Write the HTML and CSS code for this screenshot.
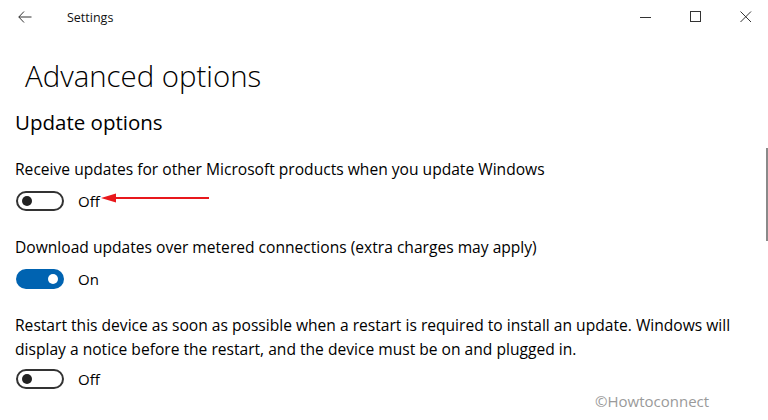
FILE: index.html
```html
<!DOCTYPE html>
<html>
<head>
<meta charset="utf-8">
<link rel="stylesheet" href="styles.css">
</head>
<body>
<div class="window">
  <div class="titlebar">
    <div class="back">
      <svg width="14" height="12" viewBox="0 0 14 12"><path d="M6 0.5 L0.8 6 L6 11.5 M0.8 6 H13.5" fill="none" stroke="#333" stroke-width="1"/></svg>
    </div>
    <div class="title">Settings</div>
    <div class="controls">
      <div class="ctl"><svg width="12" height="12" viewBox="0 0 12 12"><path d="M0 6.5 H11" stroke="#333" stroke-width="1"/></svg></div>
      <div class="ctl"><svg width="12" height="12" viewBox="0 0 12 12"><rect x="0.5" y="0.5" width="10" height="10" fill="none" stroke="#333" stroke-width="1"/></svg></div>
      <div class="ctl"><svg width="12" height="12" viewBox="0 0 12 12"><path d="M0.5 0.5 L11 11 M11 0.5 L0.5 11" stroke="#333" stroke-width="1"/></svg></div>
    </div>
  </div>
  <div class="content">
    <h1 class="page-title">Advanced options</h1>
    <h2 class="section-title">Update options</h2>

    <div class="setting first">
      <div class="label">Receive updates for other Microsoft products when you update Windows</div>
      <div class="toggle-row">
        <span class="toggle off"><span class="knob"></span></span>
        <span class="state">Off</span>
        <svg class="annot" width="112" height="12" viewBox="0 0 112 12"><path d="M12 6 H108" stroke="#e8181c" stroke-width="2"/><path d="M0 6 L15 1.5 L15 10.5 Z" fill="#e8181c"/></svg>
      </div>
    </div>

    <div class="setting">
      <div class="label">Download updates over metered connections (extra charges may apply)</div>
      <div class="toggle-row">
        <span class="toggle on"><span class="knob"></span></span>
        <span class="state">On</span>
      </div>
    </div>

    <div class="setting multi">
      <div class="label">Restart this device as soon as possible when a restart is required to install an update. Windows will display a notice before the restart, and the device must be on and plugged in.</div>
      <div class="toggle-row">
        <span class="toggle off"><span class="knob"></span></span>
        <span class="state">Off</span>
      </div>
    </div>
  </div>
  <div class="scrollbar"></div>
  <div class="watermark">©Howtoconnect</div>
</div>
</body>
</html>
```
FILE: styles.css
```css
html, body {
  margin: 0;
  padding: 0;
  background: #fff;
}
body {
  font-family: "Open Sans", "Noto Sans", sans-serif;
  color: #000;
}
.window {
  position: relative;
  width: 768px;
  height: 420px;
  overflow: hidden;
}
.titlebar {
  display: flex;
  align-items: center;
  height: 34px;
}
.back {
  width: 67px;
  padding-left: 18px;
  box-sizing: border-box;
  display: flex;
  align-items: center;
}
.title {
  font-size: 12.5px;
  color: #111;
  flex: 1;
}
.controls {
  display: flex;
  margin-right: -3px;
}
.ctl {
  width: 50px;
  display: flex;
  justify-content: center;
}
.content {
  padding-left: 15px;
}
.page-title {
  margin: 22px 0 0 10px;
  font-size: 29.4px;
  font-weight: 300;
  line-height: 40px;
  color: #000;
}
.section-title {
  margin: 12px 0 0 0;
  font-size: 20.5px;
  font-weight: 400;
  line-height: 28px;
}
.label {
  font-size: 15.6px;
  line-height: 24px;
  color: #000;
  margin-top: 22px;
  width: 730px;
}
.setting.first .label {
  margin-top: 21px;
}
.toggle-row {
  display: flex;
  align-items: center;
  height: 24px;
  margin-top: 8px;
}
.setting.multi .toggle-row {
  margin-top: 6px;
}
.toggle {
  width: 48px;
  height: 20px;
  box-sizing: border-box;
  border-radius: 10px;
  margin-left: 1px;
  position: relative;
  display: flex;
  align-items: center;
}
.toggle.off {
  border: 2px solid #333;
  padding-left: 4px;
}
.toggle.off .knob {
  width: 10px;
  height: 10px;
  border-radius: 50%;
  background: #222;
}
.toggle.on {
  background: #0063b1;
  justify-content: flex-end;
  padding-right: 6px;
}
.toggle.on .knob {
  width: 10px;
  height: 10px;
  border-radius: 50%;
  background: #fff;
}
.state {
  font-size: 15px;
  margin-left: 14px;
  color: #000;
}
.annot {
  margin-left: 1px;
  margin-top: -6px;
}
.scrollbar {
  position: absolute;
  right: 0;
  top: 148px;
  width: 2px;
  height: 93px;
  background: #8a8a8a;
}
.watermark {
  position: absolute;
  left: 595px;
  top: 391px;
  font-size: 15px;
  color: #9a9a9a;
}
```
